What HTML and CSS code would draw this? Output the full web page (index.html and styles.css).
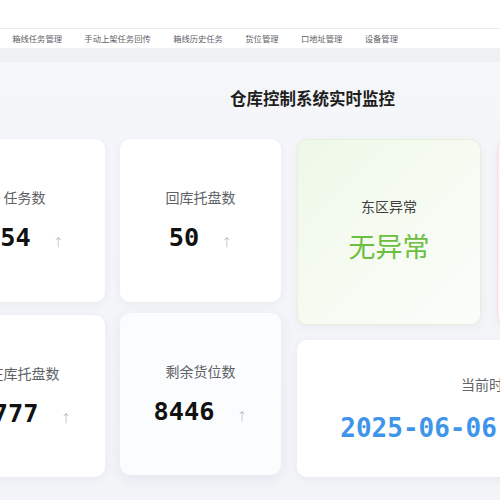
FILE: index.html
```html
<!DOCTYPE html>
<html lang="zh-CN">
<head>
<meta charset="utf-8">
<title>仓库控制系统实时监控</title>
<link rel="stylesheet" href="styles.css">
</head>
<body>
<div class="header"></div>
<nav class="nav">
  <span class="nav-item">箱线任务管理</span>
  <span class="nav-item">手动上架任务回传</span>
  <span class="nav-item">箱线历史任务</span>
  <span class="nav-item">货位管理</span>
  <span class="nav-item">口地址管理</span>
  <span class="nav-item">设备管理</span>
</nav>
<div class="band"></div>
<main class="main">
  <div class="dash">
    <h1 class="title">仓库控制系统实时监控</h1>
    <div class="grid">
      <div class="left">
        <div class="card stat">
          <div class="label">任务数</div>
          <div class="value-row"><span class="value">154</span><span class="arrow">↑</span></div>
        </div>
        <div class="card stat">
          <div class="label">回库托盘数</div>
          <div class="value-row"><span class="value">50</span><span class="arrow">↑</span></div>
        </div>
        <div class="card stat">
          <div class="label">在库托盘数</div>
          <div class="value-row"><span class="value">1777</span><span class="arrow">↑</span></div>
        </div>
        <div class="card stat stat-hover">
          <div class="label">剩余货位数</div>
          <div class="value-row"><span class="value">8446</span><span class="arrow">↑</span></div>
        </div>
      </div>
      <div class="right">
        <div class="card zone zone-ok">
          <div class="zone-label">东区异常</div>
          <div class="zone-value">无异常</div>
        </div>
        <div class="card zone zone-bad">
          <div class="zone-label">西区异常</div>
          <div class="zone-value">无异常</div>
        </div>
        <div class="card clock">
          <div class="label">当前时间</div>
          <div class="time">2025-06-06 12:30:45</div>
        </div>
      </div>
    </div>
  </div>
</main>
</body>
</html>
```
FILE: styles.css
```css
html, body {
  margin: 0;
  padding: 0;
}
body {
  width: 500px;
  height: 500px;
  overflow: hidden;
  background: #f3f5f9;
  font-family: "Noto Sans CJK SC", "Noto Sans", sans-serif;
}
.header {
  height: 28px;
  background: #ffffff;
  border-bottom: 1px solid #e8eaef;
}
.nav {
  height: 19px;
  background: #ffffff;
  display: flex;
  align-items: center;
  padding-left: 1px;
}
.nav-item {
  font-size: 8.3px;
  line-height: 19px;
  color: #5f6166;
  padding: 0 11.2px;
  white-space: nowrap;
}
.band {
  height: 14px;
  background: #eef0f4;
}
.main {
  padding-top: 24px;
  background: linear-gradient(180deg, #f5f6f9 0%, #f2f4f8 100%);
  height: 438px;
  box-sizing: border-box;
}
.dash {
  width: 737px;
  margin-left: -56px;
}
.title {
  margin: 0;
  text-align: center;
  font-size: 16.5px;
  line-height: 24px;
  font-weight: 700;
  color: #1e1e1e;
}
.grid {
  display: flex;
  gap: 16px;
  margin-top: 29px;
}
.left {
  display: grid;
  grid-template-columns: 161px 161px;
  grid-template-rows: 163px 162px;
  column-gap: 15px;
  row-gap: 13px;
}
.right {
  display: grid;
  grid-template-columns: 184px 184px;
  grid-template-rows: 186px 137px;
  column-gap: 16px;
  row-gap: 15px;
}
.card {
  background: #ffffff;
  border-radius: 10px;
  box-shadow: 0 2px 10px rgba(30, 40, 80, 0.05);
  display: flex;
  flex-direction: column;
  align-items: center;
  justify-content: center;
  box-sizing: border-box;
}
.stat-hover {
  background: #fafcfd;
  transform: translateY(-2px);
  box-shadow: 0 4px 14px rgba(30, 40, 80, 0.07);
}
.label {
  font-size: 14px;
  line-height: 20px;
  color: #606266;
}
.stat .label {
  position: relative;
  top: -1px;
}
.value-row {
  margin-top: 15px;
  display: flex;
  align-items: baseline;
  gap: 22px;
}
.value {
  font-family: "DejaVu Sans Mono", monospace;
  font-weight: 700;
  font-size: 25.3px;
  line-height: 30px;
  color: #111111;
}
.arrow {
  font-family: "Noto Sans CJK SC", sans-serif;
  font-size: 11px;
  font-weight: 300;
  color: #a6a8ad;
  position: relative;
  top: 1px;
}
.zone {
  padding-bottom: 6px;
}
.zone-ok {
  background: linear-gradient(135deg, #eef8e7 0%, #f6fbf2 50%, #fbfdf9 100%);
  border: 1px solid #e3f0da;
}
.zone-bad {
  background: linear-gradient(135deg, #fdf0f0 0%, #fef7f7 60%, #fffafa 100%);
  border: 1px solid #f7dede;
}
.zone-label {
  font-size: 14px;
  line-height: 20px;
  color: #3c3e42;
}
.zone-value {
  margin-top: 13px;
  font-size: 27px;
  line-height: 34px;
  color: #6cbf3f;
}
.clock {
  grid-column: span 2;
  padding-bottom: 0;
}
.time {
  margin-top: 18px;
  font-family: "DejaVu Sans Mono", monospace;
  font-weight: 700;
  font-size: 26px;
  line-height: 32px;
  color: #3f95ea;
  white-space: nowrap;
}
```
